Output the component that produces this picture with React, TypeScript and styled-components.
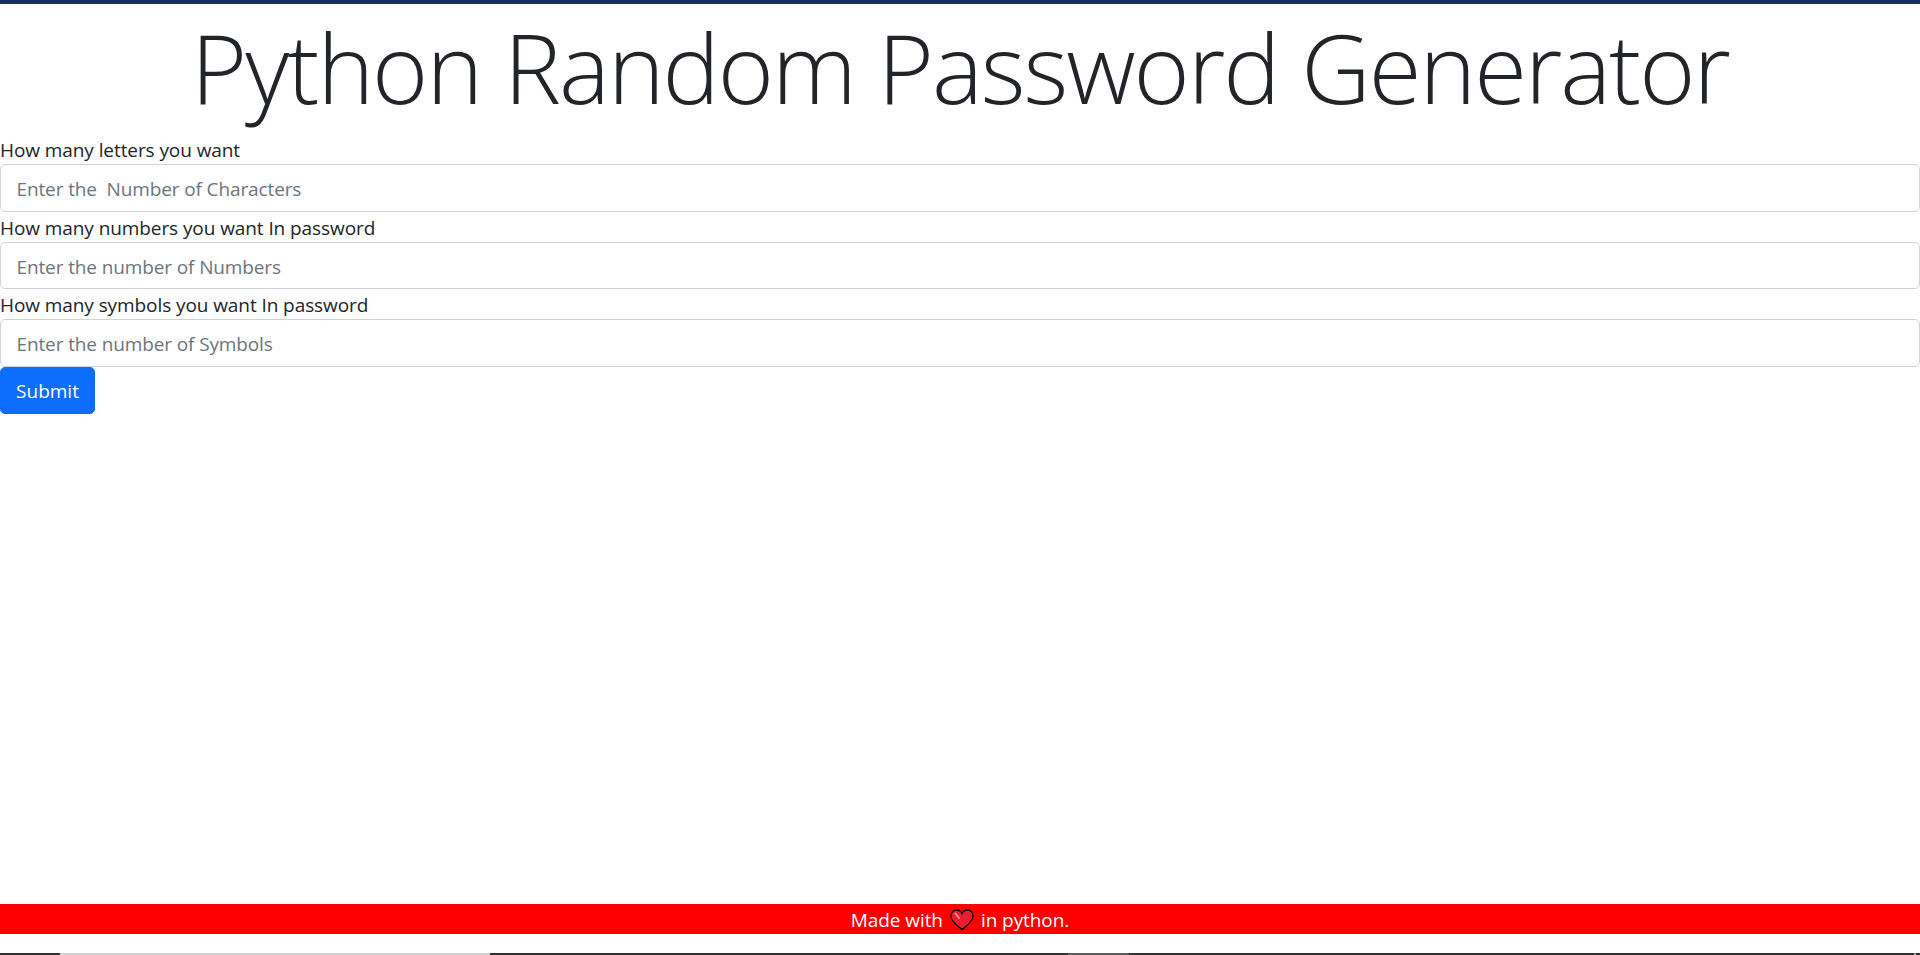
import React from 'react';
import styled, { createGlobalStyle } from 'styled-components';

const Global = createGlobalStyle`
    html, body {
        margin: 0;
        padding: 0;
        height: 100%;
        overflow: hidden;
    }
    #root {
        height: 100%;
    }
    * {
        box-sizing: border-box;
    }
`;

const Page = styled.div`
    height: 955px;
    display: flex;
    flex-direction: column;
    background: #fff;
    color: #212529;
    font-family: "Open Sans", "Noto Sans", "Liberation Sans", sans-serif;
    font-size: 19px;
    letter-spacing: -0.08px;
    line-height: 30px;
    border-top: 4px solid #15305a;
`;

const Title = styled.h1`
    margin: 0;
    height: 130px;
    font-size: 96px;
    font-weight: 300;
    letter-spacing: -2px;
    line-height: 125px;
    text-align: center;
`;

const Form = styled.form`
    flex: 1;
    display: flex;
    flex-direction: column;
    align-items: flex-start;
`;

const Label = styled.label`
    display: block;
    padding-top: 1px;
    height: 30px;
`;

const Input = styled.input`
    display: block;
    width: 100%;
    height: 47.5px;
    padding: 3px 15.5px 0;
    border: 1px solid #ced4da;
    border-radius: 5px;
    font: inherit;
    letter-spacing: -0.12px;
    color: #212529;
    background: #fff;

    &::placeholder {
        color: #6c757d;
        opacity: 1;
    }
`;

const SubmitButton = styled.button`
    width: 95px;
    height: 47.5px;
    padding: 2px 0 0;
    border: 1px solid #0d6efd;
    border-radius: 5px;
    background: #0d6efd;
    color: #fff;
    font: inherit;
`;

const Footer = styled.footer`
    height: 30px;
    padding-top: 1px;
    display: flex;
    align-items: center;
    justify-content: center;
    gap: 7px;
    background: #f00;
    color: #fff;
`;

const Heart = styled.svg`
    width: 24px;
    height: 22px;
    display: block;
`;

const TaskStrip = styled.div`
    height: 21px;
    display: flex;
    align-items: flex-end;
`;

const TaskSegment = styled.div<{ $width?: number; $color: string }>`
    height: 2px;
    flex: ${p => (p.$width ? `0 0 ${p.$width}px` : '1')};
    background: ${p => p.$color};
`;

const fields = [
    { label: 'How many letters you want', placeholder: 'Enter the  Number of Characters' },
    { label: 'How many numbers you want In password', placeholder: 'Enter the number of Numbers' },
    { label: 'How many symbols you want In password', placeholder: 'Enter the number of Symbols' },
];

const App = () => {
    return (
        <Page>
            <Global />
            <Title>Python Random Password Generator</Title>
            <Form onSubmit={e => e.preventDefault()}>
                {fields.map(f => (
                    <React.Fragment key={f.label}>
                        <Label>{f.label}</Label>
                        <Input type="text" placeholder={f.placeholder} />
                    </React.Fragment>
                ))}
                <SubmitButton type="submit">Submit</SubmitButton>
            </Form>
            <Footer>
                <span>Made with</span>
                <Heart viewBox="0 0 24 22">
                    <path
                        d="M12 20.5 C8 17.5 1 12.5 1 7 C1 3.5 3.5 1 6.5 1 C9 1 11 2.5 12 4.5 C13 2.5 15 1 17.5 1 C20.5 1 23 3.5 23 7 C23 12.5 16 17.5 12 20.5 Z"
                        fill="#ee1c30"
                        stroke="#000"
                        strokeWidth="1.3"
                    />
                    <path d="M5.5 4.5 L9 9" fill="none" stroke="#f58a80" strokeWidth="2" strokeLinecap="round" />
                </Heart>
                <span>in python.</span>
            </Footer>
            <TaskStrip>
                <TaskSegment $width={60} $color="#333" />
                <TaskSegment $width={430} $color="#d0d0d0" />
                <TaskSegment $width={578} $color="#333" />
                <TaskSegment $width={61} $color="#5c5c5c" />
                <TaskSegment $width={785} $color="#333" />
                <TaskSegment $width={2} $color="#999" />
                <TaskSegment $color="#333" />
            </TaskStrip>
        </Page>
    );
};

export default App;
